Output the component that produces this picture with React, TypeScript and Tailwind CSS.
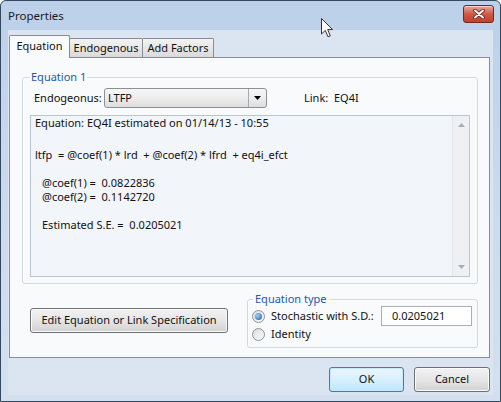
import React from 'react';

function CloseButton() {
  return (
    <div className="mt-[4px] w-[31px] h-[18px] rounded-[3px] border border-[#6e2a20] bg-gradient-to-b from-[#e9a99b] via-[#cf5a45] to-[#c2412c] flex items-center justify-center shadow-[inset_0_1px_0_rgba(255,255,255,0.5)]">
      <svg width="12" height="10" viewBox="0 0 12 10">
        <path d="M2 1.5 L10 8.5 M10 1.5 L2 8.5" stroke="#5a1c14" strokeWidth="3.6" strokeLinecap="round" />
        <path d="M2 1.5 L10 8.5 M10 1.5 L2 8.5" stroke="#ffffff" strokeWidth="2" strokeLinecap="round" />
      </svg>
    </div>
  );
}

function Radio({ checked }: { checked?: boolean }) {
  return (
    <span className="w-[13px] h-[13px] shrink-0 rounded-full border border-[#8c939b] bg-gradient-to-br from-[#dcdcdc] to-[#fbfbfb] flex items-center justify-center">
      {checked && (
        <span className="w-[7px] h-[7px] rounded-full bg-[radial-gradient(circle_at_35%_35%,#9fd0f7,#1b58b0)]" />
      )}
    </span>
  );
}

function Cursor() {
  return (
    <svg className="absolute left-[321px] top-[18px]" width="13" height="21" viewBox="0 0 13 21">
      <path d="M0.5 0.5 L0.5 16 L4.3 12.4 L7 18.8 L9.3 17.8 L6.7 11.6 L11.6 11.6 Z" fill="#ffffff" stroke="#333" strokeWidth="1" strokeLinejoin="round" />
    </svg>
  );
}

export default function App() {
  return (
    <div className="relative w-[501px] h-[402px] overflow-hidden bg-white font-['Noto_Sans','Open_Sans',sans-serif] text-[11px] text-[#111]">
      <div className="flex flex-col w-[501px] h-[402px] border border-[#34495f] rounded-t-[6px] bg-gradient-to-b from-[#bcd0e9] via-[#cbdaed] to-[#d4e0ef]">
        {/* title bar */}
        <div className="h-[29px] flex items-start justify-between pl-[7px] pr-[6px]">
          <span className="mt-[7px] leading-[16px] text-[11.5px] text-[#1a1a1a]">Properties</span>
          <CloseButton />
        </div>

        {/* client */}
        <div className="flex flex-col h-[365px] mx-[7px] bg-[#dbe5f1] pt-[5px] pl-[1px] pr-[3px]">
          {/* tabs */}
          <div className="flex items-end h-[22px]">
            <div className="relative z-10 -mb-px w-[61px] h-[23px] border border-b-0 border-[#898c95] rounded-t-[2px] bg-[#f8fafc] flex items-center justify-center pb-[2px]">
              Equation
            </div>
            <div className="w-[73px] h-[19px] border border-l-0 border-b-0 border-[#898c95] rounded-tr-[2px] bg-gradient-to-b from-[#f3f3f3] to-[#dadada] flex items-center justify-center">
              Endogenous
            </div>
            <div className="w-[71px] h-[19px] border border-l-0 border-b-0 border-[#898c95] rounded-tr-[2px] bg-gradient-to-b from-[#f3f3f3] to-[#dadada] flex items-center justify-center">
              Add Factors
            </div>
          </div>

          {/* tab panel */}
          <div className="border border-[#898c95] bg-[#f8fafc] flex flex-col pl-[12px] pr-[11px] pb-[9px]">
            <fieldset className="mt-[11px] border border-[#cfd9e1] rounded-[3px] px-[7px] pt-[3px] pb-[6px] shadow-[inset_1px_1px_0_#ffffff]">
              <legend className="px-[1px] leading-[16px] text-[#2458ad]">Equation 1</legend>
              <div className="flex items-center h-[20px]">
                <span className="ml-[4px] w-[70px]">Endogeonus:</span>
                <div className="w-[163px] h-[20px] flex rounded-[3px] border border-[#8e8f8f] bg-gradient-to-b from-[#f7f7f7] via-[#ededed] to-[#dedede]">
                  <span className="flex-1 pl-[3px] leading-[18px]">LTFP</span>
                  <span className="w-[18px] border-l border-[#a5a8ac] flex items-center justify-center">
                    <svg width="7" height="4" viewBox="0 0 7 4">
                      <path d="M0 0 L7 0 L3.5 4 Z" fill="#000" />
                    </svg>
                  </span>
                </div>
                <span className="ml-[37px] whitespace-pre">Link:  EQ4I</span>
              </div>

              <div className="mt-[7px] h-[162px] flex border border-[#b8c5d3] bg-[#f2f5f9]">
                <div className="flex-1 pl-[4px] leading-[14px] whitespace-pre">
                  <div>Equation: EQ4I estimated on 01/14/13 - 10:55</div>
                  <div className="mt-[18px]">ltfp  = @coef(1) * lrd  + @coef(2) * lfrd  + eq4i_efct</div>
                  <div className="mt-[14px] pl-[7px]">@coef(1) =  0.0822836</div>
                  <div className="pl-[7px]">@coef(2) =  0.1142720</div>
                  <div className="mt-[14px] pl-[7px]">Estimated S.E. =  0.0205021</div>
                </div>
                <div className="w-[17px] bg-[#eef0f3] border-l border-[#e3e7eb] flex flex-col justify-between items-center py-[7px]">
                  <svg width="7" height="4" viewBox="0 0 7 4">
                    <path d="M0 4 L7 4 L3.5 0 Z" fill="#a9aeb4" />
                  </svg>
                  <svg width="7" height="4" viewBox="0 0 7 4">
                    <path d="M0 0 L7 0 L3.5 4 Z" fill="#a9aeb4" />
                  </svg>
                </div>
              </div>
            </fieldset>

            <div className="mt-[8px] flex items-center">
              <button className="ml-[8px] w-[198px] h-[25px] rounded-[3px] border border-[#707070] bg-gradient-to-b from-[#f2f2f2] via-[#e6e6e6] to-[#d2d2d2] shadow-[inset_0_0_0_1px_#fbfbfb]">
                Edit Equation or Link Specification
              </button>
              <fieldset className="ml-auto w-[231px] border border-[#cfd9e1] rounded-[3px] pl-[4px] pr-[5px] pb-[5px] shadow-[inset_1px_1px_0_#ffffff]">
                <legend className="ml-[1px] px-[2px] leading-[14px] text-[#2458ad]">Equation type</legend>
                <div className="flex items-center h-[20px]">
                  <Radio checked />
                  <span className="ml-[6px]">Stochastic with S.D.:</span>
                  <div className="ml-auto w-[91px] h-[20px] border border-[#abadb3] bg-white pl-[10px] leading-[18px]">0.0205021</div>
                </div>
                <div className="flex items-center h-[16px]">
                  <Radio />
                  <span className="ml-[6px]">Identity</span>
                </div>
              </fieldset>
            </div>
          </div>

          {/* dialog buttons */}
          <div className="mt-[9px] flex justify-end gap-[10px]">
            <button className="w-[75px] h-[25px] rounded-[3px] border border-[#3c7fb1] bg-gradient-to-b from-[#eaf6fd] via-[#d9f0fc] to-[#bee6fd] shadow-[inset_0_0_0_1px_#c5e9fc]">
              OK
            </button>
            <button className="w-[76px] h-[25px] rounded-[3px] border border-[#707070] bg-gradient-to-b from-[#f2f2f2] via-[#e6e6e6] to-[#d2d2d2] shadow-[inset_0_0_0_1px_#fbfbfb]">
              Cancel
            </button>
          </div>
        </div>
      </div>
      <Cursor />
    </div>
  );
}
